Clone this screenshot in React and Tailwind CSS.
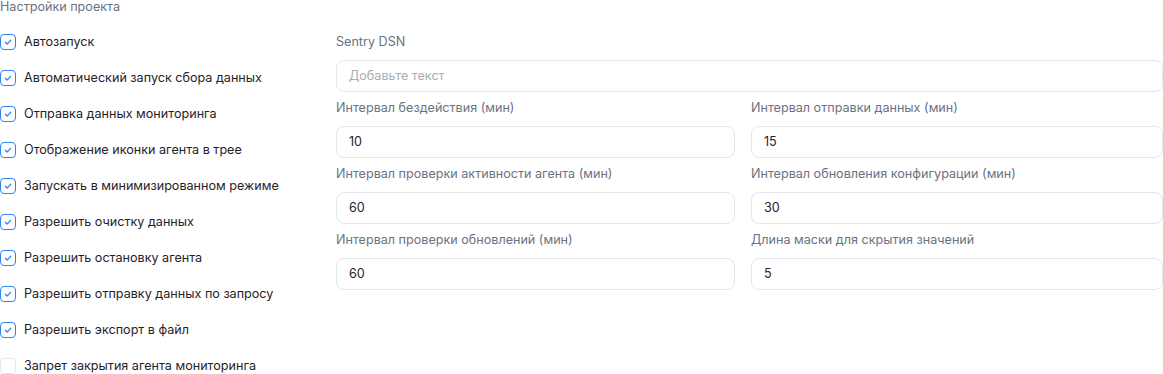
import React from "react";

const items = [
  ["Автозапуск", true],
  ["Автоматический запуск сбора данных", true],
  ["Отправка данных мониторинга", true],
  ["Отображение иконки агента в трее", true],
  ["Запускать в минимизированном режиме", true],
  ["Разрешить очистку данных", true],
  ["Разрешить остановку агента", true],
  ["Разрешить отправку данных по запросу", true],
  ["Разрешить экспорт в файл", true],
  ["Запрет закрытия агента мониторинга", false],
];

const fields = [
  ["Интервал бездействия (мин)", "10"],
  ["Интервал отправки данных (мин)", "15"],
  ["Интервал проверки активности агента (мин)", "60"],
  ["Интервал обновления конфигурации (мин)", "30"],
  ["Интервал проверки обновлений (мин)", "60"],
  ["Длина маски для скрытия значений", "5"],
];

function Check({ on }) {
  return (
    <div
      className={
        "w-4 h-4 rounded-[4px] border-[1.5px] flex items-center justify-center shrink-0 " +
        (on ? "border-[#2b84f0] bg-white" : "border-[#e3e6ea] bg-white")
      }
    >
      {on && (
        <svg width="8" height="8" viewBox="0 0 8 8" fill="none">
          <path d="M1.3 4.2 L3.2 6 L6.8 2.2" stroke="#2b84f0" strokeWidth="1.2" strokeLinecap="round" strokeLinejoin="round" />
        </svg>
      )}
    </div>
  );
}

function Field({ label, value, placeholder }) {
  return (
    <div className="flex flex-col">
      <div className="h-5 leading-5 text-[12.6px] text-[#6b7280] mb-2">{label}</div>
      <div className="h-8 rounded-lg border border-[#e3e6ea] bg-white px-3 flex items-center text-[12.6px]">
        {value ? (
          <span className="text-[#1f2328]">{value}</span>
        ) : (
          <span className="text-[#a8adb5]">{placeholder}</span>
        )}
      </div>
    </div>
  );
}

export default function App() {
  return (
    <div className="w-[1163px] h-[374px] overflow-hidden bg-white" style={{ fontFamily: "Inter, 'Noto Sans', sans-serif" }}>
      <div className="h-[13px] leading-[13px] text-[12.6px] text-[#6b7280]">Настройки проекта</div>
      <div className="flex mt-[11px]">
        <div className="w-[336px] shrink-0 flex flex-col">
          {items.map(([t, on]) => (
            <div key={t} className="h-9 flex items-center gap-2">
              <Check on={on} />
              <span className="text-[12.6px] text-[#1f2328]">{t}</span>
            </div>
          ))}
        </div>
        <div className="flex-1 pt-2 flex flex-col gap-[6px]">
          <Field label="Sentry DSN" placeholder="Добавьте текст" />
          <div className="grid grid-cols-[399px_1fr] gap-x-4 gap-y-[6px]">
            {fields.map(([l, v]) => (
              <Field key={l} label={l} value={v} />
            ))}
          </div>
        </div>
      </div>
    </div>
  );
}
